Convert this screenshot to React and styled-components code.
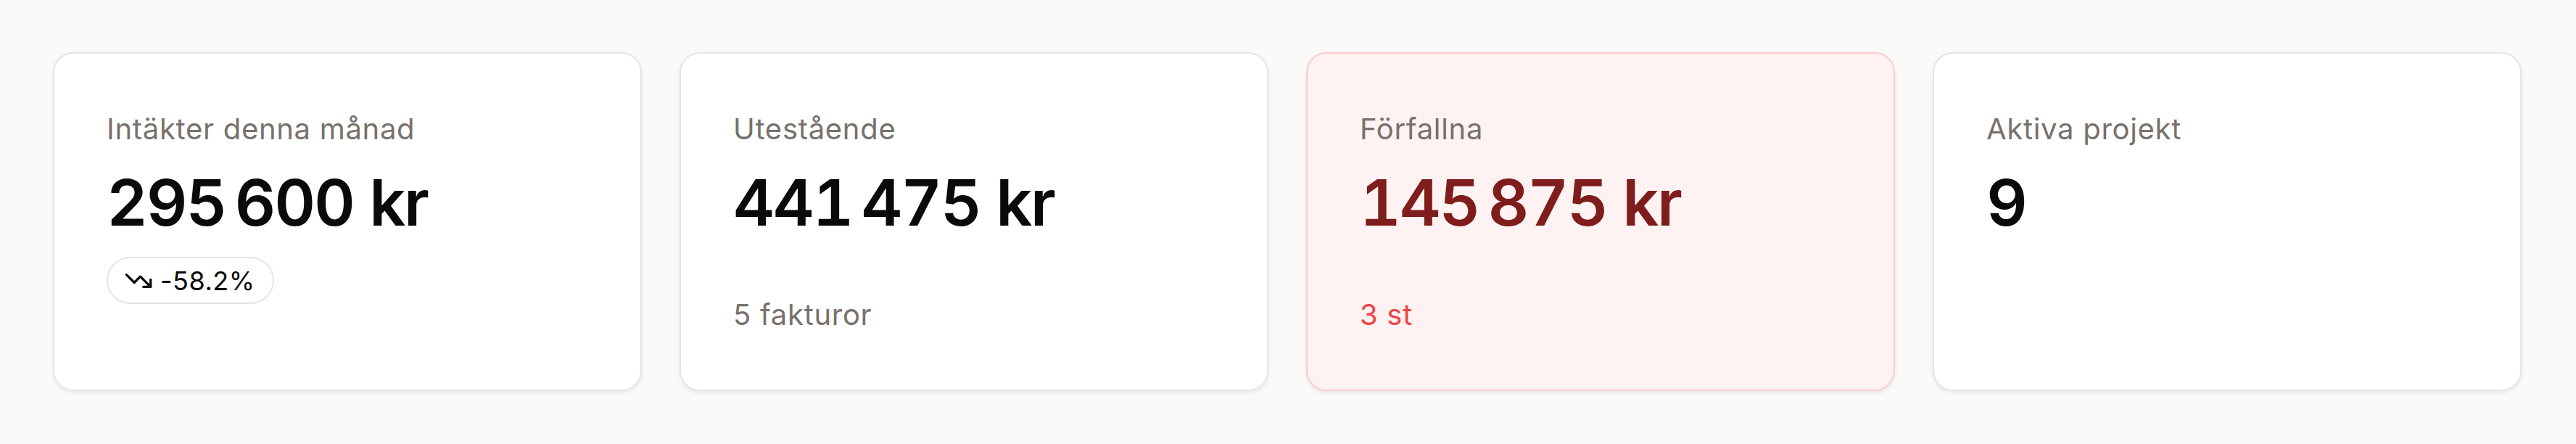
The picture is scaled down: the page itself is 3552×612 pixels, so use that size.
import styled, { createGlobalStyle } from "styled-components";
import { TrendingDown } from "lucide-react";

const GlobalStyle = createGlobalStyle`
  html, body {
    margin: 0;
    padding: 0;
    background: #fafaf9;
  }
  body {
    font-family: Inter, "Noto Sans", sans-serif;
    -webkit-font-smoothing: antialiased;
  }
`;

const Page = styled.div`
  box-sizing: border-box;
  width: 3552px;
  height: 612px;
  padding: 72px 75px 73px 73px;
  background: #fafaf9;
`;

const Grid = styled.div`
  display: grid;
  grid-template-columns: repeat(4, 1fr);
  gap: 52px;
  height: 100%;
`;

const Card = styled.div`
  box-sizing: border-box;
  display: flex;
  flex-direction: column;
  align-items: flex-start;
  min-height: 467px;
  padding: 72px;
  border-radius: 28px;
  border: 2px solid ${(p) => (p.$danger ? "#fecaca" : "#e7e5e4")};
  background: ${(p) => (p.$danger ? "#fef2f2" : "#ffffff")};
  box-shadow: 0 3px 6px rgba(0, 0, 0, 0.07);
`;

const Label = styled.div`
  font-size: 40px;
  line-height: 63px;
  font-weight: 400;
  letter-spacing: 0.7px;
  color: #78716c;
`;

const Value = styled.div`
  margin-top: 22px;
  font-size: 88px;
  line-height: 97px;
  font-weight: 600;
  letter-spacing: -0.025em;
  font-variant-numeric: tabular-nums;
  color: ${(p) => (p.$danger ? "#7f1d1d" : "#0c0a09")};
`;

const Trend = styled.div`
  display: flex;
  align-items: center;
  gap: 10px;
  box-sizing: border-box;
  height: 65px;
  margin-top: 26px;
  padding: 0 24px 0 22px;
  border: 2px solid #e7e5e4;
  border-radius: 999px;
  background: #fff;
  font-size: 36px;
  font-weight: 400;
  letter-spacing: 0.5px;
  color: #0c0a09;
`;

const Foot = styled.div`
  margin-top: auto;
  font-size: 40px;
  line-height: 63px;
  letter-spacing: 0.7px;
  color: ${(p) => (p.$danger ? "#ef4444" : "#78716c")};
`;

const kr = (n) => n.toLocaleString("sv-SE").replace(/\s/g, "\u202f") + "\u00a0kr";

const stats = [
  { label: "Intäkter denna månad", value: kr(295600), trend: "-58.2%" },
  { label: "Utestående", value: kr(441475), foot: "5 fakturor" },
  { label: "Förfallna", value: kr(145875), foot: "3 st", danger: true },
  { label: "Aktiva projekt", value: "9" },
];

export default function App() {
  return (
    <>
      <GlobalStyle />
      <Page>
        <Grid>
          {stats.map((s) => (
            <Card key={s.label} $danger={s.danger}>
              <Label>{s.label}</Label>
              <Value $danger={s.danger}>{s.value}</Value>
              {s.trend && (
                <Trend>
                  <TrendingDown size={40} strokeWidth={2} />
                  {s.trend}
                </Trend>
              )}
              {s.foot && <Foot $danger={s.danger}>{s.foot}</Foot>}
            </Card>
          ))}
        </Grid>
      </Page>
    </>
  );
}
